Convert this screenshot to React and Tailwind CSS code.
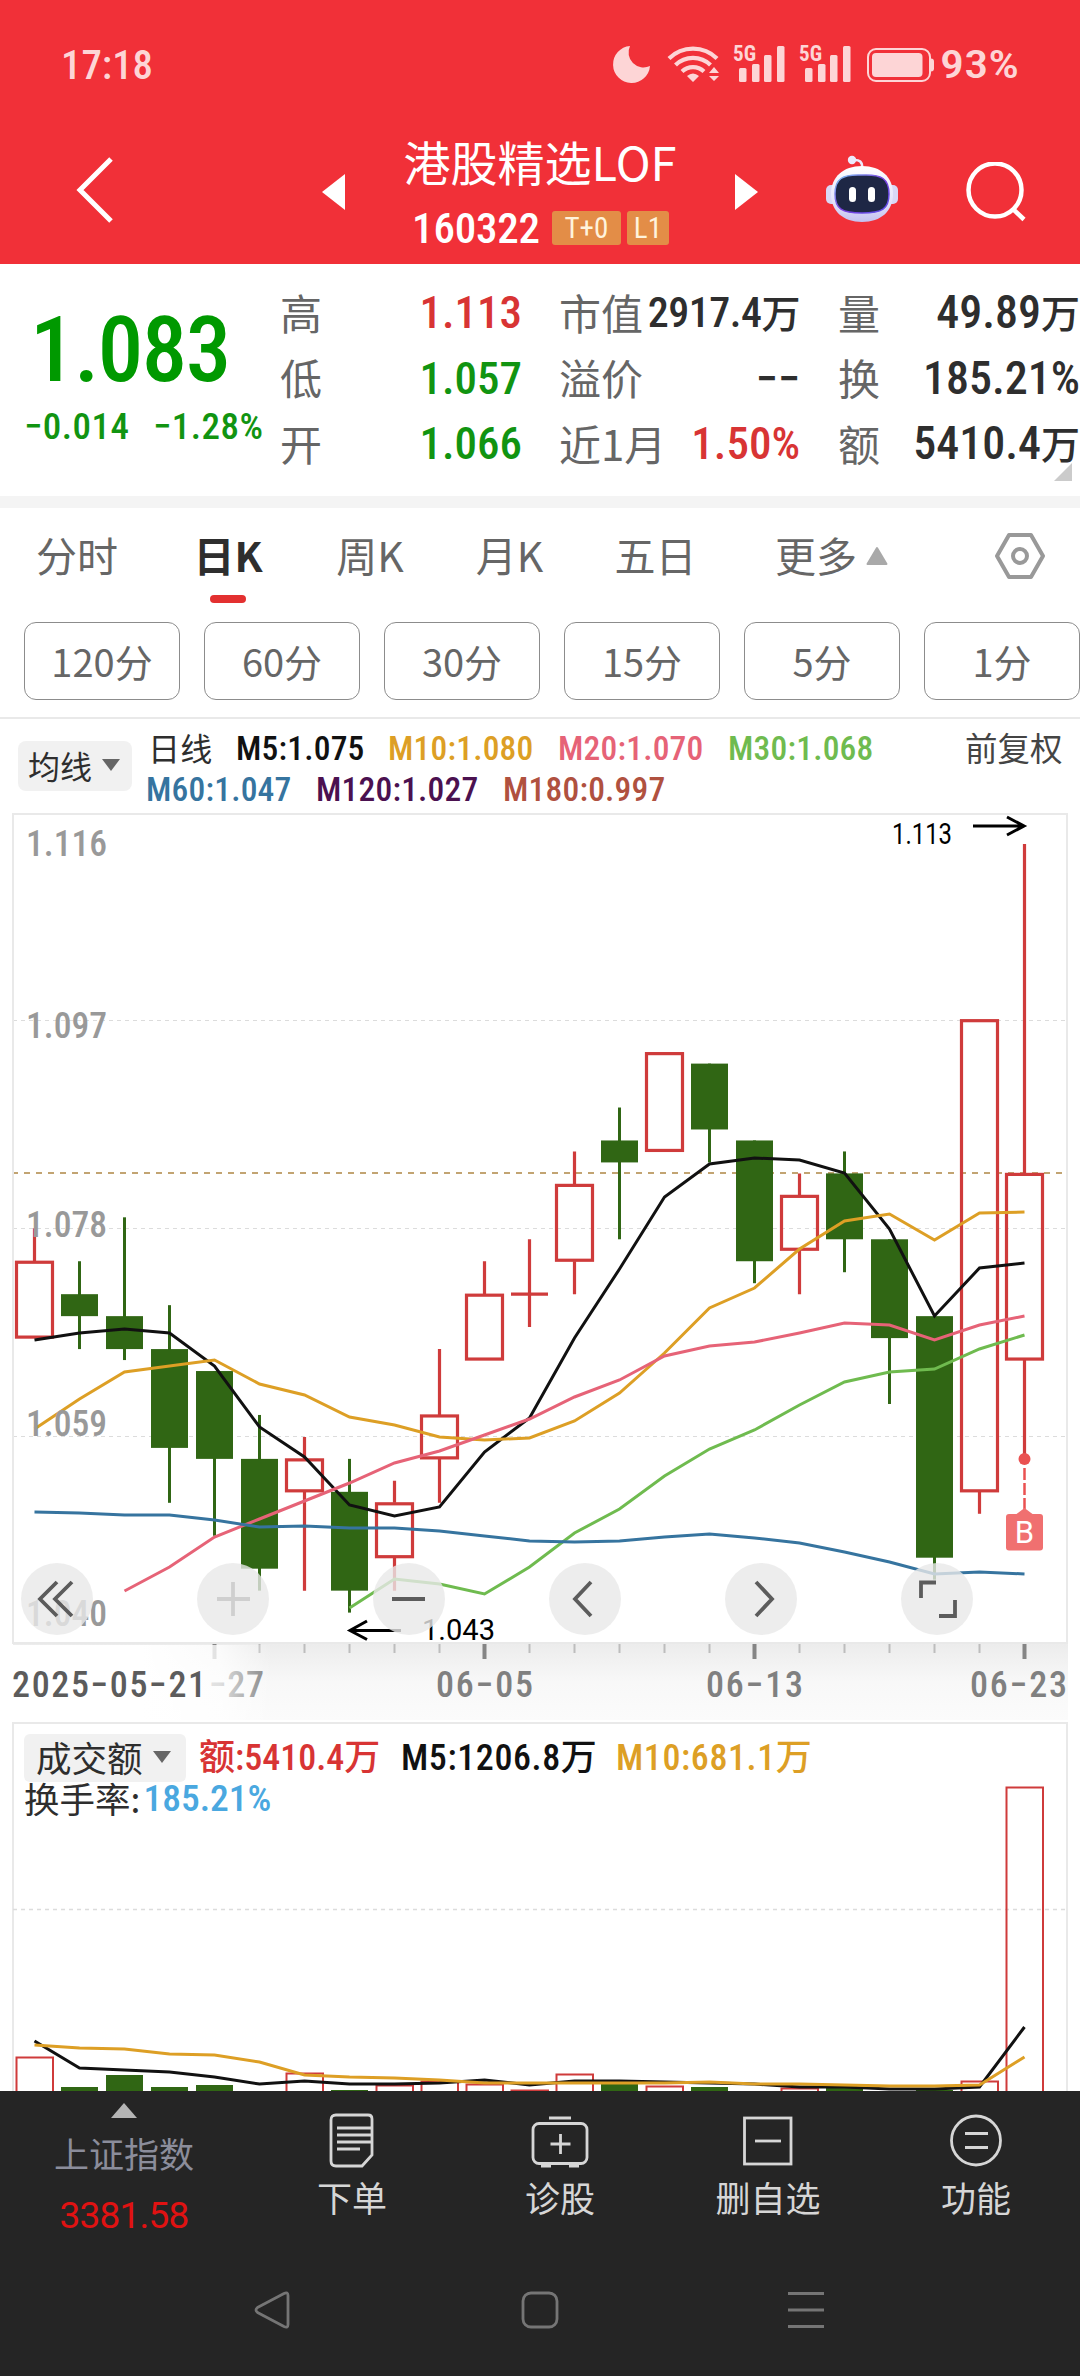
const NUM = "font-['Roboto_Condensed','Noto_Sans_CJK_SC',sans-serif]";
const CJK = "font-['Noto_Sans_CJK_SC',sans-serif]";

const RED = '#cf3b3b';
const GREEN = '#306614';

// [open, close, high, low] in thousandths above 1.000
const candles = [
  [68, 75, 78, 68], [72, 70, 75, 67], [70, 67, 79, 66], [67, 58, 71, 53],
  [65, 57, 65, 50], [57, 47, 61, 45], [54, 57, 59, 45], [54, 45, 57, 43],
  [48, 53, 55, 45], [57, 61, 67, 53], [66, 72, 75, 66], [72, 72, 77, 69],
  [75, 82, 85, 72], [86, 84, 89, 77], [85, 94, 94, 85], [93, 87, 93, 84],
  [86, 75, 86, 73], [76, 81, 83, 72], [83, 77, 85, 74], [77, 68, 77, 62],
  [70, 48, 70, 46], [54, 97, 97, 52], [66, 83, 113, 57],
];

const averages = [
  { id: 'M5', color: '#111111', from: 0, ys: [1340, 1333, 1329, 1333, 1366, 1427, 1457, 1505, 1516, 1507, 1452, 1418, 1338, 1269, 1197, 1164, 1158, 1160, 1173, 1229, 1316, 1268, 1263] },
  { id: 'M10', color: '#dd9f25', from: 0, ys: [1429, 1399, 1372, 1366, 1360, 1384, 1395, 1417, 1425, 1437, 1440, 1438, 1421, 1393, 1353, 1308, 1288, 1249, 1221, 1214, 1240, 1213, 1212] },
  { id: 'M20', color: '#e66377', from: 2, ys: [1591, 1567, 1537, 1519, 1501, 1483, 1463, 1451, 1435, 1419, 1397, 1380, 1356, 1346, 1342, 1333, 1323, 1325, 1340, 1325, 1316] },
  { id: 'M30', color: '#6fbb4f', from: 7, ys: [1608, 1579, 1584, 1594, 1567, 1533, 1509, 1476, 1449, 1430, 1405, 1382, 1372, 1369, 1349, 1335] },
  { id: 'M60', color: '#36749f', from: 0, ys: [1512, 1513, 1515, 1515, 1520, 1527, 1526, 1528, 1528, 1531, 1536, 1541, 1542, 1541, 1537, 1534, 1538, 1543, 1552, 1562, 1574, 1572, 1574] },
];

const volumeTops = [2057, 2087, 2075, 2087, 2085, 2092, 2073, 2090, 2085, 2081, 2084, 2090, 2074, 2084, 2086, 2087, 2092, 2088, 2088, 2092, 2090, 2081, 1787];
const volumeM5 = [2041, 2068, 2070, 2072, 2077, 2084, 2081, 2084, 2084, 2083, 2080, 2085, 2081, 2081, 2082, 2083, 2084, 2087, 2087, 2089, 2089, 2087, 2027];
const volumeM10 = [2045, 2048, 2049, 2054, 2055, 2062, 2075, 2077, 2078, 2080, 2083, 2083, 2083, 2083, 2083, 2082, 2084, 2084, 2085, 2086, 2086, 2085, 2057];

const cx = (i) => 34.5 + i * 45;
const py = (p) => 844 + (113 - p) * 10.98;
const toPoints = (ys, from = 0) => ys.map((y, i) => `${cx(i + from)},${y}`).join(' ');

function StatusBar() {
  return (
    <div className={`flex h-[128px] items-center justify-between pr-[62px] pl-[60px] text-[#fdd5d6] ${NUM}`}>
      <svg width="96" height="60" viewBox="0 0 96 60" fill="currentColor">
        <text x="1" y="44.500" fontSize="41" fontWeight="500" textLength="92" lengthAdjust="spacingAndGlyphs">17:18</text>
      </svg>
      <svg width="412" height="60" viewBox="606 34 412 60" fill="currentColor">
        <path d="M630 46a18.500 18.500 0 1 0 20 20 15 15 0 0 1-20-20Z" />
        <g fill="none" stroke="currentColor" strokeWidth="4.200">
          <path d="M669 58.500a34 34 0 0 1 48 0" />
          <path d="M675.500 65a25 25 0 0 1 35 0" />
          <path d="M682 71.500a16 16 0 0 1 22 0" />
        </g>
        <path d="M693 82l-6-6q6-5 12 0ZM714 67l5 6h-10ZM714 81l5-5h-10Z" />
        {[0, 66].map((dx) => (
          <g key={dx} transform={`translate(${dx} 0)`}>
            <text x="733" y="61" fontSize="22" fontWeight="700" textLength="23" lengthAdjust="spacingAndGlyphs">5G</text>
            <rect x="739" y="68" width="7.500" height="14" rx="1.500" />
            <rect x="752" y="64" width="7.500" height="18" rx="1.500" />
            <rect x="764" y="55" width="7.500" height="27" rx="1.500" />
            <rect x="777" y="46" width="7.500" height="36" rx="1.500" />
          </g>
        ))}
        <rect x="868" y="49" width="62" height="32" rx="8" fill="none" stroke="currentColor" strokeWidth="2" />
        <rect x="872" y="53" width="50.500" height="24" rx="4" />
        <path d="M931 58.500q3 0 3 3v7q0 3-3 3Z" />
        <text x="940" y="78" fontSize="39" fontWeight="500" textLength="79" lengthAdjust="spacingAndGlyphs">93%</text>
      </svg>
    </div>
  );
}

function Robot() {
  return (
    <svg width="74" height="68" viewBox="0 0 74 68">
      <defs>
        <linearGradient id="shell" x1="0" y1="0" x2="0" y2="1">
          <stop offset="0" stopColor="#ffffff" />
          <stop offset="0.650" stopColor="#e4e2fa" />
          <stop offset="1" stopColor="#c3c1f0" />
        </linearGradient>
        <linearGradient id="rim" x1="0" y1="0" x2="1" y2="1">
          <stop offset="0" stopColor="#7fc9f0" />
          <stop offset="0.500" stopColor="#7a3fe0" />
          <stop offset="1" stopColor="#5a50e8" />
        </linearGradient>
      </defs>
      <path d="M28 5q10-1 9 8" fill="none" stroke="#eceafc" strokeWidth="2.500" />
      <circle cx="27" cy="5" r="4.200" fill="#eceafc" />
      <rect x="1" y="30" width="12" height="19" rx="5" fill="#d9d8f6" />
      <rect x="61" y="30" width="12" height="19" rx="5" fill="#d9d8f6" />
      <path d="M37 11C56 11 68 22 68 39S56 67 37 67 6 56 6 39 18 11 37 11Z" fill="url(#shell)" />
      <path d="M37 20C57 19 64 24 64 39S57 58 37 58 10 54 10 39 17 19 37 20Z" fill="#1e2745" stroke="url(#rim)" strokeWidth="1.500" />
      <rect x="24" y="32" width="7" height="15" rx="3.500" fill="#fff" />
      <rect x="43" y="32" width="7" height="15" rx="3.500" fill="#fff" />
    </svg>
  );
}

function Header() {
  return (
    <header className="h-[264px] bg-[#f13038] text-white">
      <StatusBar />
      <div className="flex h-[136px] items-start">
        <svg className="mt-7 ml-[76px]" width="40" height="68" viewBox="0 0 40 68" fill="none" stroke="#fff" strokeWidth="5">
          <path d="M35 3 4 34l31 31" />
        </svg>
        <svg className="mt-[46px] ml-[206px]" width="23" height="36" viewBox="0 0 23 36" fill="#fff">
          <path d="M23 0v36L0 18Z" />
        </svg>
        <div className="flex w-[390px] flex-col items-center">
          <div className={`mt-[2px] h-[62px] text-[47px] leading-[62px] whitespace-nowrap ${CJK}`}>港股精选LOF</div>
          <div className="mt-[18px] flex items-center pl-px">
            <span className={`text-[43px] leading-9 font-medium tracking-[-0.2px] ${NUM}`}>160322</span>
            <span className={`ml-3 h-[34px] w-[69px] rounded-[3px] bg-[#e38d47] text-center text-[29px] leading-[35px] text-[#fff3dc] ${NUM}`}>T+0</span>
            <span className={`ml-1.5 h-[34px] w-[42px] rounded-[3px] bg-[#e38d47] text-center text-[29px] leading-[35px] text-[#fff3dc] ${NUM}`}>L1</span>
          </div>
        </div>
        <svg className="mt-[46px]" width="23" height="36" viewBox="0 0 23 36" fill="#fff">
          <path d="M0 0v36l23-18Z" />
        </svg>
        <div className="mt-[27px] ml-[67px]">
          <Robot />
        </div>
        <svg className="mt-[34px] ml-[67px]" width="62" height="62" viewBox="0 0 62 62" fill="none" stroke="#fff" strokeWidth="4.500">
          <circle cx="29" cy="28" r="26.500" />
          <path d="m47 47 11 10.500" />
        </svg>
      </div>
    </header>
  );
}

function Stat({ label, value, unit, tone = 'text-[#2e2e2e]', size = 'text-[45px]' }) {
  return (
    <div className="flex h-[65.500px] items-center justify-between">
      <span className={`text-[42px] leading-[60px] whitespace-nowrap text-[#666] ${CJK}`}>{label}</span>
      <span className={`flex items-center pt-0.5 font-medium whitespace-nowrap ${size} ${tone} ${NUM}`}>
        {value}
        {unit && <span className={`pb-1 text-[39px] leading-[56px] ${CJK}`}>{unit}</span>}
      </span>
    </div>
  );
}

function Quote() {
  return (
    <section className="relative flex h-[232px] pt-[15px]">
      <div className={`w-[280px] text-[#009900] ${NUM}`}>
        <div className="pt-[26px] pl-[30px] text-[91px] leading-[90px] font-medium tracking-[-1.5px]">1.083</div>
        <div className="mt-[14px] flex text-[37px] leading-9 font-medium tracking-[0.5px] text-[#119411]">
          <span className="ml-[24px] w-[129px]">−0.014</span>
          <span className="whitespace-nowrap">−1.28%</span>
        </div>
      </div>
      <div className="w-[242px]">
        <Stat label="高" value="1.113" tone="text-[#d83434]" />
        <Stat label="低" value="1.057" tone="text-[#119411]" />
        <Stat label="开" value="1.066" tone="text-[#119411]" />
      </div>
      <div className="ml-[37px] w-[241px]">
        <Stat label="市值" value="2917.4" unit="万" size="text-[42px] tracking-[-0.5px]" />
        <Stat label="溢价" value="−−" />
        <Stat label="近1月" value="1.50%" tone="text-[#d83434]" />
      </div>
      <div className="ml-[38px] w-[242px]">
        <Stat label="量" value="49.89" unit="万" size="text-[46px]" />
        <Stat label="换" value="185.21%" size="text-[46px]" />
        <Stat label="额" value="5410.4" unit="万" size="text-[46px]" />
      </div>
      <svg className="absolute right-2 bottom-[15px]" width="18" height="18" viewBox="0 0 18 18">
        <path d="M18 0v18H0Z" fill="#cbcbcb" />
      </svg>
    </section>
  );
}

const tabs = [
  { label: '分时', width: 154 },
  { label: '日K', width: 148, active: true },
  { label: '周K', width: 136 },
  { label: '月K', width: 143 },
  { label: '五日', width: 149 },
];

function Tabs() {
  return (
    <nav className={`flex h-[114px] text-[41px] text-[#666] ${CJK}`}>
      {tabs.map((t) => (
        <div key={t.label} className="flex flex-col items-center pt-4" style={{ width: t.width }}>
          <span className={`leading-[60px] whitespace-nowrap ${t.active ? 'font-bold text-[#2e2e2e]' : ''}`}>{t.label}</span>
          {t.active && <span className="mt-[11px] h-2 w-9 rounded-full bg-[#e33030]" />}
        </div>
      ))}
      <div className="flex w-[255px] pt-4 pl-[45px] leading-[60px]">
        <span>更多</span>
        <svg className="mt-[22px] ml-2" width="24" height="20" viewBox="0 0 24 20">
          <path d="M12 2 21.500 18h-19Z" fill="#a9a9a9" stroke="#a9a9a9" strokeWidth="2" strokeLinejoin="round" />
        </svg>
      </div>
      <svg className="mt-6 ml-[10px]" width="50" height="48" viewBox="0 0 50 48" fill="none" stroke="#999" strokeWidth="4" strokeLinejoin="round">
        <path d="M14 3h22l12 21-12 21H14L2 24Z" />
        <circle cx="25" cy="24" r="7" />
      </svg>
    </nav>
  );
}

function Periods() {
  return (
    <div className={`flex h-[97px] gap-6 overflow-hidden border-b-2 border-[#e9e9e9] pl-6 text-[38px] text-[#666] ${CJK}`}>
      {['120分', '60分', '30分', '15分', '5分', '1分'].map((p) => (
        <span key={p} className="flex h-[78px] w-[156px] shrink-0 items-center justify-center rounded-[12px] border border-[#8c8c8c] pb-0.5">
          {p}
        </span>
      ))}
    </div>
  );
}

function Caret({ className }) {
  return (
    <svg className={className} width="18" height="12" viewBox="0 0 18 12">
      <path d="M0 0h18L9 12Z" fill="#666" />
    </svg>
  );
}

function Legend() {
  const item = 'whitespace-nowrap';
  return (
    <div className={`flex h-[89px] text-[33.500px] font-medium ${NUM}`}>
      <div className={`mt-[22px] ml-[18px] flex h-[50px] w-[114px] items-center rounded-lg bg-[#f1f1f1] pb-0.5 pl-2.5 text-[32px] font-normal text-[#2e2e2e] ${CJK}`}>
        均线
        <Caret className="ml-2.5" />
      </div>
      <div className="ml-[14px] w-[819px] pt-[9px] leading-[41px] tracking-[0.2px]">
        <div className="flex">
          <span className={`ml-0.5 w-[88px] text-[32px] leading-[38px] font-normal text-[#2e2e2e] ${CJK}`}>日线</span>
          <span className={`w-[152px] text-[#111] ${item}`}>M5:1.075</span>
          <span className={`w-[170px] text-[#dd9f25] ${item}`}>M10:1.080</span>
          <span className={`w-[170px] text-[#e66377] ${item}`}>M20:1.070</span>
          <span className={`text-[#6fbb4f] ${item}`}>M30:1.068</span>
        </div>
        <div className="flex">
          <span className={`w-[170px] text-[#36749f] ${item}`}>M60:1.047</span>
          <span className={`w-[187px] text-[#4b1150] ${item}`}>M120:1.027</span>
          <span className={`text-[#b0513f] ${item}`}>M180:0.997</span>
        </div>
      </div>
      <span className={`pt-[9px] text-[32.500px] leading-[38px] font-normal whitespace-nowrap text-[#444] ${CJK}`}>前复权</span>
    </div>
  );
}

function Candle({ data, i }) {
  const [open, close, high, low] = data;
  const x = cx(i);
  const top = py(Math.max(open, close));
  const bottom = py(Math.min(open, close));
  if (close < open) {
    return (
      <g fill={GREEN}>
        <rect x={x - 1.5} y={py(high)} width="3" height={py(low) - py(high)} />
        <rect x={x - 18.5} y={top} width="37" height={bottom - top} />
      </g>
    );
  }
  return (
    <g fill="none" stroke={RED} strokeWidth="3.200">
      <path d={`M${x} ${py(high)}V${top}M${x} ${bottom}V${py(low)}`} />
      {open === close ? <path d={`M${x - 18.5} ${top}h37`} /> : <rect x={x - 18} y={top + 1} width="36" height={bottom - top - 2} />}
    </g>
  );
}

const axisLabels = [
  ['1.116', 856], ['1.097', 1038], ['1.078', 1237], ['1.059', 1436], ['1.040', 1626],
];

const controls = [
  { id: 'first', icon: 'M36 19 19 36l17 17M51 19 34 36l17 17' },
  { id: 'in', icon: 'M20 36h33M36 19v34', muted: true },
  { id: 'out', icon: 'M19 36h33' },
  { id: 'prev', icon: 'M42 19 26 36l16 17' },
  { id: 'next', icon: 'M31 19l16 17-16 17' },
  { id: 'full', icon: 'M20 35V19.500h15M54 37v16H38' },
];

function PriceChart() {
  return (
    <div className={`relative h-[912px] ${NUM}`}>
      <svg className="block" width="1080" height="912" viewBox="0 808 1080 912">
        <defs>
          <linearGradient id="strip" x1="0" y1="0" x2="0" y2="1">
            <stop offset="0" stopColor="#ececec" />
            <stop offset="0.500" stopColor="#f8f8f8" />
            <stop offset="1" stopColor="#fbfbfb" />
          </linearGradient>
          <linearGradient id="fade" x1="0" x2="1">
            <stop offset="0" stopColor="#fff" />
            <stop offset="0.600" stopColor="#fff" stopOpacity="0.750" />
            <stop offset="1" stopColor="#fff" stopOpacity="0" />
          </linearGradient>
        </defs>
        <rect x="13" y="1644" width="1055" height="76" fill="url(#strip)" />

        <g stroke="#dcdcdc" strokeWidth="1.200" strokeDasharray="4 4">
          <path d="M13 1020.500h1053M13 1228.500h1053M13 1436.500h1053" />
        </g>
        <path d="M12 1173h1055" stroke="#c2a472" strokeWidth="2" strokeDasharray="6 6" />
        <rect x="13" y="814" width="1054" height="829" fill="none" stroke="#e9e9e9" strokeWidth="2" />

        {candles.map((c, i) => <Candle key={i} data={c} i={i} />)}
        {averages.map((a) => (
          <polyline key={a.id} points={toPoints(a.ys, a.from)} fill="none" stroke={a.color} strokeWidth="3" />
        ))}

        <g fill="#999" fontSize="37" fontWeight="500">
          {axisLabels.map(([t, y]) => (
            <text key={t} x="26" y={y} textLength="81" lengthAdjust="spacingAndGlyphs">{t}</text>
          ))}
        </g>

        <g fill="#000" fontSize="30" className="font-['Roboto']">
          <text x="892" y="844" textLength="60" lengthAdjust="spacingAndGlyphs">1.113</text>
          <text x="422" y="1640" textLength="73" lengthAdjust="spacingAndGlyphs">1.043</text>
        </g>
        <g fill="none" stroke="#000" strokeWidth="3">
          <path d="M973 826h50M1007 817l17 9-17 9" />
          <path d="M401 1630.500h-50M367 1621l-17 9.500 17 9" />
        </g>

        {/* buy marker */}
        <circle cx="1024.500" cy="1459" r="6" fill="#ea5151" />
        <path d="M1024.500 1468v42" stroke="#ea5151" strokeWidth="2.500" strokeDasharray="12 3" />
        <path d="M1024.500 1508l8 6h-16Z" fill="#f07070" />
        <rect x="1006" y="1514" width="37" height="36.500" rx="3" fill="#f07070" />
        <text x="1024.500" y="1543" textAnchor="middle" fontSize="31" fill="#fff" className="font-['Roboto']">B</text>

        {candles.map((_, i) => {
          if (i < 4) return null;
          const major = [4, 10, 16, 22].includes(i);
          return (
            <path key={i} d={`M${cx(i)} 1644v${major ? 15 : 9}`} stroke={major ? '#858585' : '#bdbdbd'} strokeWidth={major ? 4 : 2} />
          );
        })}
        <g fill="#808080" fontSize="36" fontWeight="500">
          <text x="209" y="1697" textLength="55" lengthAdjust="spacing">−27</text>
          {/* the start date sits on a white fade that covers the left of the axis */}
          <rect x="13" y="1645" width="130" height="75" fill="#fff" />
          <rect x="142" y="1645" width="130" height="75" fill="url(#fade)" />
          <text x="436" y="1697" textLength="97" lengthAdjust="spacing">06−05</text>
          <text x="706" y="1697" textLength="97" lengthAdjust="spacing">06−13</text>
          <text x="970" y="1697" textLength="97" lengthAdjust="spacing">06−23</text>
          <text x="12" y="1697" textLength="194" lengthAdjust="spacing" fill="#5c5c5c">2025−05−21</text>
        </g>
      </svg>
      <div className="absolute top-[755px] left-[21px] flex gap-[104px]">
        {controls.map((c) => (
          <button key={c.id} className="size-[72px] rounded-full bg-[#e8e8e8]/80">
            <svg width="72" height="72" viewBox="0 0 72 72" fill="none" stroke={c.muted ? '#cfcfcf' : '#5c5c5c'} strokeWidth="3.800">
              <path d={c.icon} />
            </svg>
          </button>
        ))}
      </div>
    </div>
  );
}

function VolumeChart() {
  return (
    <div className="relative h-[371px]">
      <svg className="block" width="1080" height="371" viewBox="0 1720 1080 371">
        <path d="M13 2100V1723h1054v377" fill="none" stroke="#e9e9e9" strokeWidth="2" />
        <path d="M13 1909.500h1053" stroke="#dcdcdc" strokeWidth="1.500" strokeDasharray="4 4" />
        {volumeTops.map((y, i) => {
          const [open, close] = candles[i];
          return close < open ? (
            <rect key={i} x={cx(i) - 18.5} y={y} width="37" height="40" fill={GREEN} />
          ) : (
            <rect key={i} x={cx(i) - 18} y={y + 0.5} width="36.500" height="400" fill="none" stroke={RED} strokeWidth="2" />
          );
        })}
        <polyline points={toPoints(volumeM5)} fill="none" stroke="#111" strokeWidth="3" />
        <polyline points={toPoints(volumeM10)} fill="none" stroke="#dd9f25" strokeWidth="3" />
      </svg>
      <div className={`absolute inset-x-0 top-[14px] ${NUM}`}>
        <div className="flex h-12 items-center text-[36px] leading-[40px] font-medium tracking-[0.6px]">
          <div className={`ml-6 flex h-12 w-[162px] items-center rounded-md bg-[#f1f1f1] pb-0.5 pl-3 text-[35.500px] leading-[36px] font-normal tracking-normal text-[#2e2e2e] ${CJK}`}>
            成交额
            <Caret className="ml-2.5" />
          </div>
          <span className="ml-[13px] w-[202px] tracking-normal whitespace-nowrap text-[#d83434]">额:5410.4万</span>
          <span className="w-[215px] whitespace-nowrap text-[#111]">M5:1206.8万</span>
          <span className="whitespace-nowrap text-[#dd9f25]">M10:681.1万</span>
        </div>
        <div className="ml-6 flex h-8 items-center text-[37.500px] leading-[32px] font-medium">
          <span className={`mr-[3px] text-[35.500px] leading-[32px] font-normal text-[#2e2e2e] ${CJK}`}>换手率:</span>
          <span className="text-[#4aa8e0]">185.21%</span>
        </div>
      </div>
    </div>
  );
}

const actions = [
  {
    label: '下单',
    icon: (
      <>
        <path d="M12 3h32q4 0 4 4v36L38 54H12q-5 0-5-5V8q0-5 5-5Z" />
        <path d="M13 16h34M13 23h34M13 30h34M13 37h23" />
      </>
    ),
  },
  {
    label: '诊股',
    icon: (
      <>
        <rect x="1" y="11.500" width="54" height="40" rx="6" />
        <path d="M17 6h22M28.500 22v20M18.500 32h20M9 54h10M37 54h10" />
      </>
    ),
  },
  {
    label: '删自选',
    icon: (
      <>
        <rect x="4.500" y="6" width="46.500" height="46" />
        <path d="M15 29h26" />
      </>
    ),
  },
  {
    label: '功能',
    icon: (
      <>
        <circle cx="28" cy="28.500" r="24.500" />
        <path d="M17 21.500h23M17 35.500h23" />
      </>
    ),
  },
];

function BottomBar() {
  return (
    <footer className="h-[285px] bg-[#252525]">
      <div className="flex h-[141px]">
        <div className="flex w-[248px] flex-col items-center pt-3">
          <svg className="shrink-0" width="26" height="15" viewBox="0 0 26 15">
            <path d="M13 0 26 15H0Z" fill="#b5b5b5" />
          </svg>
          <span className={`mt-[11px] text-[35px] leading-[48px] text-[#8b8d9b] ${CJK}`}>上证指数</span>
          <span className="mt-[15px] font-['Roboto'] text-[37px] leading-[48px] tracking-[-0.8px] text-[#e01212]">3381.58</span>
        </div>
        {actions.map((a) => (
          <div key={a.label} className="flex w-[208px] flex-col items-center pt-[21px]">
            <svg className="shrink-0 overflow-visible" width="56" height="58" viewBox="0 0 56 58" fill="none" stroke="#d6d6d6" strokeWidth="2.800">
              {a.icon}
            </svg>
            <span className={`mt-[3px] text-[35px] leading-[48px] text-[#d6d6d6] ${CJK}`}>{a.label}</span>
          </div>
        ))}
      </div>
      <div className="flex items-center pt-[59px] pl-[254px]">
        <svg width="36" height="38" viewBox="0 0 36 38" fill="none" stroke="#757575" strokeWidth="2.800" strokeLinejoin="round">
          <path d="M30 2.500q4-2 4 2v29q0 4-4 2L3.500 21.500q-3-2.500 0-5Z" />
        </svg>
        <svg className="ml-[231px]" width="38" height="38" viewBox="0 0 38 38" fill="none" stroke="#757575" strokeWidth="2.800">
          <rect x="2" y="2" width="34" height="34" rx="8" />
        </svg>
        <svg className="ml-[229px]" width="36" height="38" viewBox="0 0 36 38" stroke="#757575" strokeWidth="2.800">
          <path d="M0 2.500h36M0 19h36M0 35.500h36" />
        </svg>
      </div>
    </footer>
  );
}

export default function App() {
  return (
    <div className="w-[1080px] overflow-hidden bg-white">
      <Header />
      <Quote />
      <div className="h-3 bg-[#f4f4f4]" />
      <Tabs />
      <Periods />
      <Legend />
      <PriceChart />
      <VolumeChart />
      <BottomBar />
    </div>
  );
}
